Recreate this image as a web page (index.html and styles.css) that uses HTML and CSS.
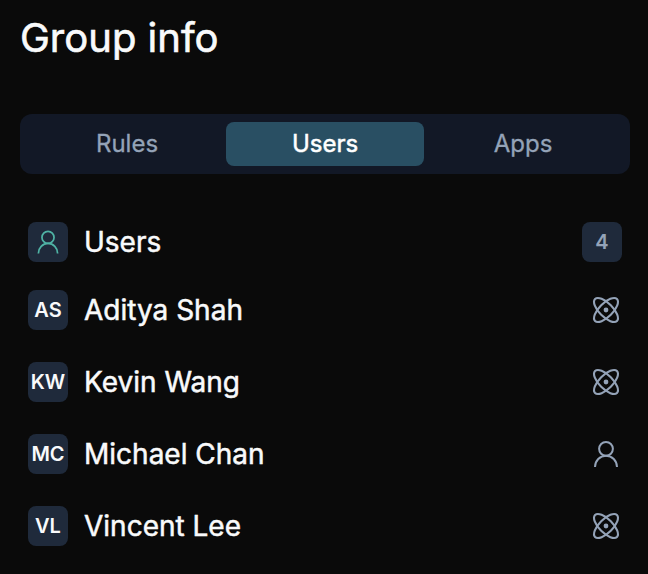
FILE: index.html
```html
<!DOCTYPE html>
<html lang="en"><head><meta charset="utf-8"><title>Group info</title><link rel="stylesheet" href="styles.css"></head>
<body>
<svg class="defs" aria-hidden="true">
<symbol id="user" viewBox="0 0 32 32"><circle cx="16" cy="10.800" r="6.900"/><path d="M5 29a11 11.300 0 0 1 22 0"/></symbol>
<symbol id="atom" viewBox="0 0 32 32"><ellipse cx="16" cy="16" rx="15.500" ry="6.800" transform="rotate(45 16 16)"/><ellipse cx="16" cy="16" rx="15.500" ry="6.800" transform="rotate(-45 16 16)"/><circle class="dot" cx="16" cy="16" r="2.400"/></symbol>
</svg>
<main class="panel">
<h1 class="title">Group info</h1>
<nav class="tabs"><button class="tab">Rules</button><button class="tab active">Users</button><button class="tab">Apps</button></nav>
<header class="row heading"><span class="badge teal"><svg class="icon"><use href="#user"/></svg></span><h2 class="name">Users</h2><span class="badge count">4</span></header>
<ul class="list">
<li class="row"><span class="badge">AS</span><span class="name">Aditya Shah</span><svg class="kind atom"><use href="#atom"/></svg></li>
<li class="row"><span class="badge">KW</span><span class="name">Kevin Wang</span><svg class="kind atom"><use href="#atom"/></svg></li>
<li class="row"><span class="badge">MC</span><span class="name">Michael Chan</span><svg class="kind"><use href="#user"/></svg></li>
<li class="row"><span class="badge">VL</span><span class="name">Vincent Lee</span><svg class="kind atom"><use href="#atom"/></svg></li>
</ul>
</main></body></html>
```
FILE: styles.css
```css
*{box-sizing:border-box}
body{margin:0;background:#0a0a0a;color:#f9fafb;font-family:Inter,sans-serif;height:574px;overflow:hidden}
.defs{display:none}
.panel{padding:14px 18px 0 20px}
.title{margin:0;font-size:40px;line-height:48px;font-weight:400;-webkit-text-stroke:.6px}
.tabs{display:grid;grid-template-columns:repeat(3,1fr);height:60px;margin-top:52px;padding:8px;background:#121826;border-radius:12px}
.tab{border:0;border-radius:8px;background:none;color:#94a3b8;font:400 24px/44px Inter,sans-serif;padding:0;-webkit-text-stroke:.3px}
.tab.active{background:#294f63;color:#fff;-webkit-text-stroke:.5px}
.row{display:flex;align-items:center;gap:16px;height:40px;padding:0 8px}
.heading{margin-top:48px}
.list{list-style:none;margin:28px 0 0;padding:0;display:flex;flex-direction:column;gap:32px}
.badge{display:flex;align-items:center;justify-content:center;width:40px;height:40px;border-radius:8px;background:#1f2a3b;font-size:20px;font-weight:600}
.name{flex:1;margin:0;font-size:28px;line-height:40px;font-weight:400;-webkit-text-stroke:.5px}
.count{color:#94a3b8}
svg{fill:none;stroke:#94a3b8;stroke-width:2;overflow:visible}
.teal svg{stroke:#4fb3a5}
.icon{width:28px;height:28px}
.kind{width:32px;height:32px}
.atom{stroke-width:2.100}
.dot{fill:#94a3b8;stroke:none}
```
